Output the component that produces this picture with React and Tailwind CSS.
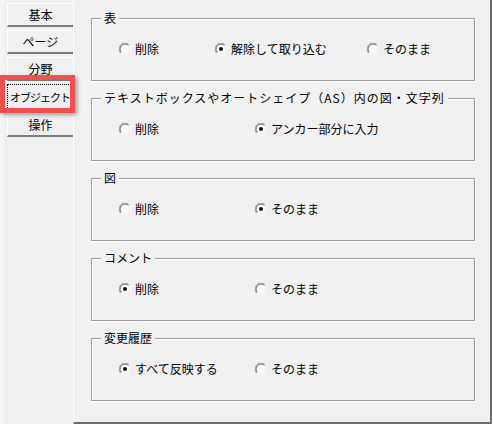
import React from "react";

const FONT = { fontFamily: '"Meiryo UI", "Noto Sans CJK JP", "Noto Sans", sans-serif' };

function Radio({ checked }) {
  return (
    <svg width="12" height="12" viewBox="0 0 12 12" className="shrink-0">
      <circle cx="6" cy="6" r="5.5" fill="#ffffff" />
      <path d="M1.8 10.2 A5.5 5.5 0 0 1 10.2 1.8" fill="none" stroke="#a0a0a0" strokeWidth="1" />
      <path d="M10.2 1.8 A5.5 5.5 0 0 1 1.8 10.2" fill="none" stroke="#ffffff" strokeWidth="1" />
      <path d="M2.5 9.5 A4.5 4.5 0 0 1 9.5 2.5" fill="none" stroke="#696969" strokeWidth="1" />
      <path d="M9.5 2.5 A4.5 4.5 0 0 1 2.5 9.5" fill="none" stroke="#e3e3e3" strokeWidth="1" />
      {checked && <circle cx="6" cy="6" r="2" fill="#000000" />}
    </svg>
  );
}

function Option({ checked, label, className }) {
  return (
    <div className={"flex items-center gap-[4px] " + (className || "")}>
      <Radio checked={checked} />
      <span className="leading-[16px] whitespace-nowrap">{label}</span>
    </div>
  );
}

function Group({ title, titleClass, children }) {
  return (
    <fieldset className="h-[71px] border border-[#a0a0a0] shadow-[1px_1px_0_#ffffff,inset_1px_1px_0_#ffffff]">
      <legend className={"ml-[9px] px-[3px] bg-[#f0f0f0] leading-[16px] whitespace-nowrap " + (titleClass || "")}>{title}</legend>
      <div className="mt-[15px] flex pl-[27px]">{children}</div>
    </fieldset>
  );
}

function Tab({ label }) {
  return (
    <div className="h-[24px] flex items-center justify-center border-t border-l border-white border-b-2 border-b-[#7a7a7a] bg-[#f0f0f0] leading-[16px]">
      {label}
    </div>
  );
}

export default function App() {
  return (
    <div style={FONT} className="w-[492px] h-[424px] flex bg-[#f0f0f0] text-[12px] text-black overflow-hidden">
      <div className="relative w-[73px] shrink-0 flex">
        <div className="w-[4px] bg-[#f5f5f5]" />
        <div className="flex flex-col gap-[3px] pt-[3px] pl-[3px] w-[69px]">
          <Tab label="基本" />
          <Tab label="ページ" />
          <Tab label="分野" />
          <div className="h-[26px] flex items-center justify-center bg-[#f0f0f0] border border-dotted border-black whitespace-nowrap text-[11px] tracking-[-1px]">
            オブジェクト
          </div>
          <Tab label="操作" />
        </div>
        <div className="absolute left-0 top-[75px] w-[75px] h-[38px] border-[5px] border-[#f05050] shadow-[2px_2px_4px_rgba(0,0,0,0.35)]" />
      </div>
      <div className="flex-1 border-l border-white border-r-2 border-r-[#6e6e6e] border-b-2 border-b-[#6e6e6e] pl-[17px] pr-[15px] pt-[10px] flex flex-col gap-[9px]">
        <Group title="表">
          <Option label="削除" className="w-[96px]" />
          <Option label="解除して取り込む" checked className="w-[152px]" />
          <Option label="そのまま" />
        </Group>
        <Group title="テキストボックスやオートシェイプ（AS）内の図・文字列" titleClass="tracking-[1px]">
          <Option label="削除" className="w-[136px]" />
          <Option label="アンカー部分に入力" checked />
        </Group>
        <Group title="図">
          <Option label="削除" className="w-[136px]" />
          <Option label="そのまま" checked />
        </Group>
        <Group title="コメント">
          <Option label="削除" checked className="w-[136px]" />
          <Option label="そのまま" />
        </Group>
        <Group title="変更履歴">
          <Option label="すべて反映する" checked className="w-[136px]" />
          <Option label="そのまま" />
        </Group>
      </div>
    </div>
  );
}
